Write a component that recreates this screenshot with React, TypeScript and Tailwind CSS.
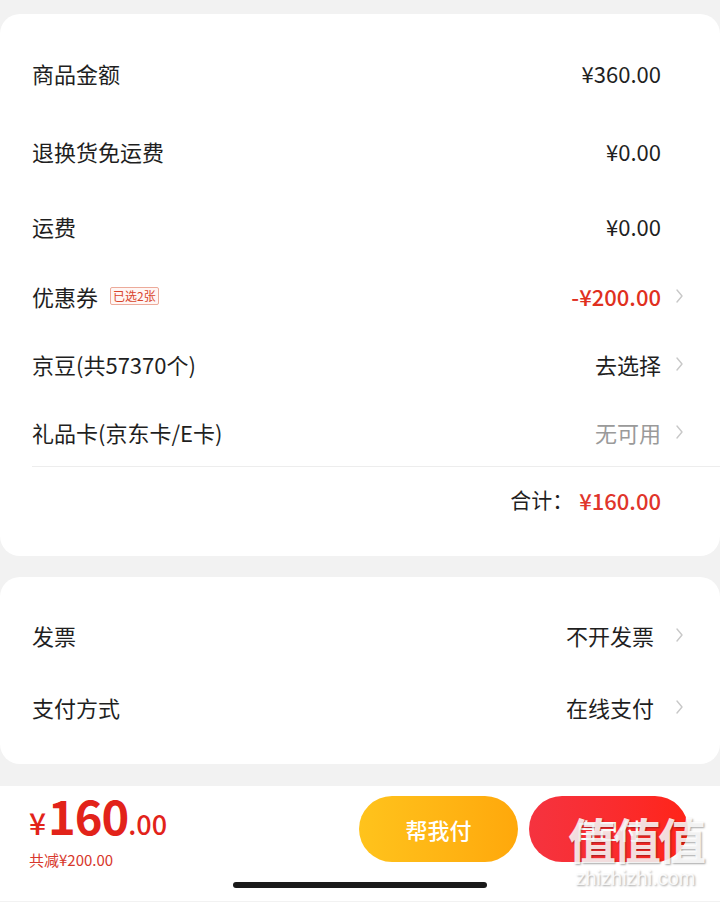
import { ReactNode } from "react"

const font = { fontFamily: '"Noto Sans CJK SC", "Noto Sans", sans-serif' }

function Chevron() {
  return (
    <svg width="9" height="16" viewBox="0 0 9 16" fill="none">
      <path d="M2 2l5 6-5 6" stroke="#c8c8c8" strokeWidth="1.4" strokeLinecap="round" strokeLinejoin="round" />
    </svg>
  )
}

function Row({
  label,
  value,
  arrow,
  h,
}: {
  label: ReactNode
  value: ReactNode
  arrow?: boolean
  h: string
}) {
  return (
    <div className={`flex items-center justify-between pl-8 ${h}`}>
      <div className="flex items-center text-[22px] text-[#1f1f1f]">{label}</div>
      <div className="flex items-center">
        <div className="text-[22px]">{value}</div>
        <div className="w-7 flex justify-end pr-[5px]">{arrow && <Chevron />}</div>
      </div>
    </div>
  )
}

export default function App() {
  return (
    <div className="w-[720px] h-[902px] bg-[#f2f2f2] pt-[14px] relative overflow-hidden" style={font}>
      {/* 费用明细 */}
      <div className="bg-white rounded-[20px] pt-5 pb-[23px] pr-[31px]">
        <Row h="h-[78px]" label="商品金额" value={<span className="text-[#1f1f1f]">¥360.00</span>} />
        <Row h="h-[78px]" label="退换货免运费" value={<span className="text-[#1f1f1f]">¥0.00</span>} />
        <Row h="h-[72px]" label="运费" value={<span className="text-[#1f1f1f]">¥0.00</span>} />
        <Row
          h="h-[68px]"
          label={
            <>
              优惠券
              <span className="ml-3 text-[12px] leading-[16px] text-[#d9452c] border border-[#ecaa9a] bg-[#fff6f4] rounded-[2px] px-[2px]">
                已选2张
              </span>
            </>
          }
          value={<span className="text-[#e0301e] font-medium">-¥200.00</span>}
          arrow
        />
        <Row h="h-[68px]" label="京豆(共57370个)" value={<span className="text-[#1f1f1f]">去选择</span>} arrow />
        <Row h="h-[68px]" label="礼品卡(京东卡/E卡)" value={<span className="text-[#9a9a9a]">无可用</span>} arrow />
        <div className="ml-8 -mr-[31px] h-px bg-[#ededed]" />
        <div className="h-[66px] flex items-center justify-end pr-7">
          <span className="text-[21px] text-[#1f1f1f] mr-[6px]">合计：</span>
          <span className="text-[22px] text-[#e0352b] font-medium">¥160.00</span>
        </div>
      </div>

      {/* 发票 / 支付 */}
      <div className="mt-[21px] bg-white rounded-[20px] pt-[22px] pb-[21px] pr-[31px]">
        <div className="flex items-center justify-between pl-8 h-[72px]">
          <span className="text-[22px] text-[#1f1f1f]">发票</span>
          <div className="flex items-center">
            <span className="text-[22px] text-[#1f1f1f]">不开发票</span>
            <div className="w-[35px] flex justify-end pr-[5px]"><Chevron /></div>
          </div>
        </div>
        <div className="flex items-center justify-between pl-8 h-[72px]">
          <span className="text-[22px] text-[#1f1f1f]">支付方式</span>
          <div className="flex items-center">
            <span className="text-[22px] text-[#1f1f1f]">在线支付</span>
            <div className="w-[35px] flex justify-end pr-[5px]"><Chevron /></div>
          </div>
        </div>
      </div>

      {/* 底部结算栏 */}
      <div className="mt-[22px] bg-white h-[115px] relative">
        <div className="flex items-start justify-between pl-[29px] pr-8 pt-[10px]">
          <div className="text-[#e2231a]">
            <div className="flex items-baseline leading-none -mt-[5px]">
              <span className="text-[30px] font-medium">¥</span>
              <span className="text-[47px] font-bold ml-[2px] tracking-[-1px]">160</span>
              <span className="text-[27px] font-medium">.00</span>
            </div>
            <div className="mt-[14px] text-[15px] leading-none text-[#d8382c]">共减¥200.00</div>
          </div>
          <div className="flex gap-[11px]">
            <div className="w-[159px] h-[66px] rounded-full bg-gradient-to-r from-[#ffc31c] to-[#ffa80b] flex items-center justify-center text-white text-[22px] font-medium">
              帮我付
            </div>
            <div className="w-[159px] h-[66px] rounded-full bg-gradient-to-r from-[#f5333f] to-[#ff2417] flex items-center justify-center text-white text-[22px] font-medium">
              自己付
            </div>
          </div>
        </div>
        <div className="absolute left-[233px] top-[96px] w-[254px] h-[6px] rounded-full bg-[#1a1a1a]" />
      </div>

      {/* 水印 */}
      <div className="absolute left-[568px] top-[814px] flex flex-col items-center text-white/85 [text-shadow:1px_1px_2px_rgba(0,0,0,0.35)] pointer-events-none">
        <span className="text-[48px] leading-none font-bold tracking-[-3px]">值值值</span>
        <span className="text-[20px] leading-none mt-[6px]" style={{ fontFamily: '"Liberation Sans", sans-serif' }}>
          zhizhizhi.com
        </span>
      </div>
    </div>
  )
}
